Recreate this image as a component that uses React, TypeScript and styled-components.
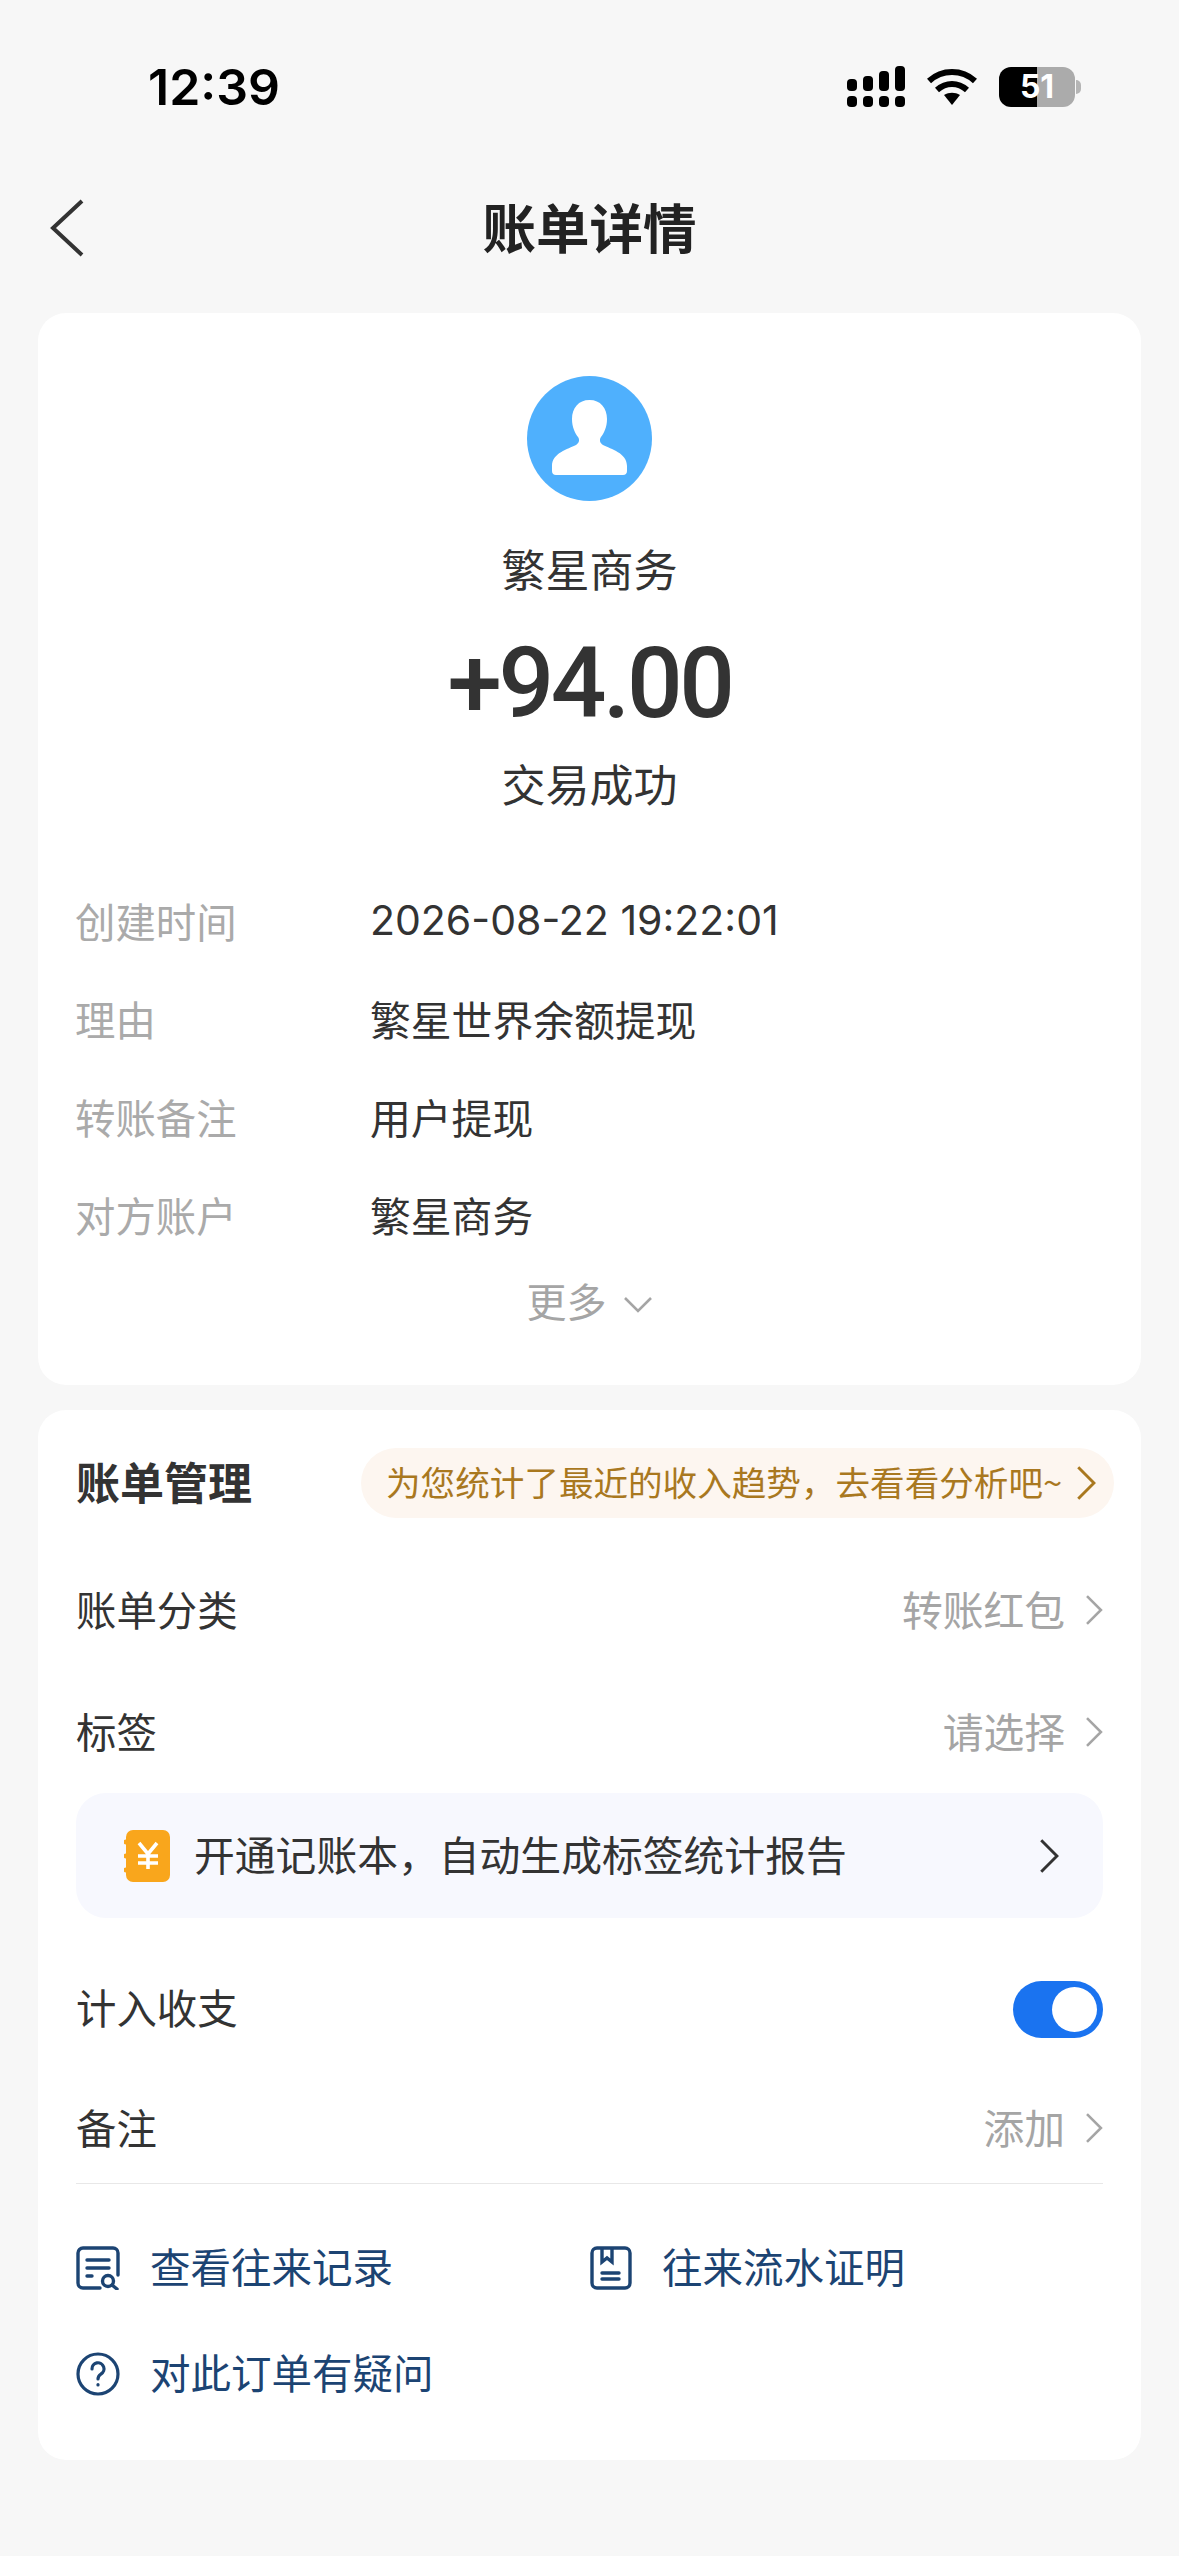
import React, {ReactElement} from 'react';
import styled, {createGlobalStyle} from 'styled-components';

const cjk = `"Noto Sans CJK SC", "Noto Sans", sans-serif`;
const latin = `Inter, "Noto Sans CJK SC", sans-serif`;

const GlobalStyle = createGlobalStyle`
  html, body {
    margin: 0;
    padding: 0;
    background: #f7f7f7;
  }

  * {
    box-sizing: border-box;
  }
`;

const Page = styled.div`
  width: 1179px;
  height: 2556px;
  overflow: hidden;
  background: #f7f7f7;
  color: #333;
  font-family: ${cjk};
`;

const StatusBar = styled.div`
  display: flex;
  justify-content: space-between;
  align-items: center;
  height: 174px;
  padding: 0 104px 0 148px;
`;

const Time = styled.div`
  font-family: ${latin};
  font-size: 50px;
  font-weight: 600;
  color: #000;
`;

const StatusIcons = styled.div`
  display: flex;
  align-items: center;
  gap: 22px;
`;

const Battery = styled.div`
  position: relative;
  width: 76px;
  height: 40px;
  border-radius: 12px;
  background: linear-gradient(90deg, #000 50%, #ababab 50%);
  color: #fff;
  font-family: ${latin};
  font-size: 32px;
  font-weight: 700;
  line-height: 40px;
  text-align: center;

  &::after {
    content: '';
    position: absolute;
    top: 13px;
    right: -6px;
    width: 5px;
    height: 14px;
    border-radius: 0 5px 5px 0;
    background: #b5b5b5;
  }
`;

const Nav = styled.div`
  position: relative;
  display: flex;
  justify-content: center;
  align-items: flex-start;
  height: 106px;
  margin-bottom: 33px;
`;

const BackIcon = styled.svg`
  position: absolute;
  left: 49px;
  top: 25px;
`;

const NavTitle = styled.h1`
  margin: 17px 0 0;
  font-size: 53.500px;
  font-weight: 700;
  line-height: 70px;
  color: #222;
`;

const Card = styled.section`
  margin: 0 38px;
  background: #fff;
  border-radius: 28px;
`;

const SummaryCard = styled(Card)`
  display: flex;
  flex-direction: column;
  align-items: center;
  padding: 63px 38px 55px;
  margin-bottom: 25px;
`;

const Name = styled.div`
  margin-top: 37px;
  font-size: 44px;
  line-height: 60px;
`;

const Amount = styled.div`
  margin-top: 31px;
  font-family: Roboto, sans-serif;
  font-size: 98px;
  font-weight: 500;
  letter-spacing: -3.400px;
  line-height: 110px;
  color: #333;
`;

const Result = styled(Name)`
  margin-top: 14px;
`;

const Details = styled.dl`
  display: grid;
  grid-template-columns: 295px 1fr;
  grid-auto-rows: 98px;
  align-items: center;
  width: calc(100% + 1px);
  margin: 58px 0 0 -1px;
`;

const Label = styled.dt`
  font-size: 40.400px;
  color: #aaa;
`;

const Value = styled.dd<{$latin?: boolean}>`
  margin: 0;
  font-family: ${({$latin}) => $latin ? latin : cjk};
  font-size: ${({$latin}) => $latin ? 41 : 40.800}px;
  color: #333;
`;

const More = styled.div`
  display: flex;
  align-items: center;
  gap: 16px;
  height: 60px;
  margin-top: 7px;
  font-size: 40px;
  color: #a5a5a5;

  svg {
    margin-top: 10px;
  }
`;

const ManageCard = styled(Card)`
  padding: 38px 38px 33px;
`;

const ManageHeader = styled.div`
  display: flex;
  justify-content: space-between;
  align-items: center;
  height: 70px;
  margin: 0 -11px 31px 0;
`;

const ManageTitle = styled.h2`
  margin: 0 0 4px;
  font-size: 44px;
  font-weight: 700;
  color: #333;
`;

const Pill = styled.div`
  display: flex;
  align-items: center;
  justify-content: space-between;
  width: 753px;
  height: 70px;
  padding: 0 18px 4px 25px;
  border-radius: 35px;
  background: #fdf6f0;
  color: #a9781f;
  font-size: 34.600px;
  white-space: nowrap;

  svg {
    margin-top: 4px;
  }
`;

const Row = styled.div<{$height?: number; $lift?: number; $ruled?: boolean}>`
  display: flex;
  justify-content: space-between;
  align-items: center;
  height: ${({$height}) => $height ?? 122}px;
  padding-bottom: ${({$lift}) => $lift ?? 4}px;
  border-bottom: ${({$ruled}) => $ruled ? '1px solid #e8e8e8' : 'none'};
  font-size: 40.400px;
  color: #333;
`;

const RowValue = styled.div`
  display: flex;
  align-items: center;
  gap: 20px;
  font-size: 40.800px;
  color: #a5a5a5;

  svg {
    margin-top: 3px;
  }
`;

const Banner = styled.div`
  display: flex;
  align-items: center;
  height: 125px;
  margin: 0 0 30px;
  padding: 0 44px 4px 48px;
  border-radius: 30px;
  background: #f7f8fe;
  font-size: 40.800px;
  color: #333;

  svg {
    margin-top: 4px;
  }
`;

const BannerText = styled.span`
  flex: 1;
  margin-left: 24px;
`;

const Toggle = styled.div`
  display: flex;
  justify-content: flex-end;
  align-items: center;
  width: 90px;
  height: 57px;
  margin-top: 6px;
  padding-right: 6px;
  border-radius: 29px;
  background: #1a73f0;

  &::after {
    content: '';
    width: 45px;
    height: 45px;
    border-radius: 50%;
    background: #fff;
  }
`;

const Links = styled.div`
  display: grid;
  grid-template-columns: 514px 1fr;
  grid-auto-rows: 106px;
  align-items: center;
  margin-top: 31px;
`;

const LinkItem = styled.div`
  display: flex;
  align-items: center;
  gap: 30px;
  font-size: 40.500px;
  color: #1c4473;
`;

const LinkText = styled.span`
  margin-bottom: 5px;
`;

function Chevron({color = '#a5a5a5', h = 32}: {color?: string; h?: number}): ReactElement {
  return (
    <svg width={h * 0.56} height={h} viewBox="0 0 18 32" fill="none">
      <path d="M2 2l14 14L2 30" stroke={color} strokeWidth="2.6" />
    </svg>
  );
}

function IconLedger(): ReactElement {
  return (
    <svg width="44" height="44" viewBox="0 0 44 44" fill="none" stroke="#1c4473" strokeWidth="3.4" strokeLinecap="round">
      <path d="M24 42H7a5 5 0 0 1-5-5V7a5 5 0 0 1 5-5h30a5 5 0 0 1 5 5v22" />
      <path d="M11 14h22M11 22h22M11 30h5" />
      <circle cx="32" cy="35" r="5.5" />
      <path d="M36 39l5 4" />
    </svg>
  );
}

function IconProof(): ReactElement {
  return (
    <svg width="42" height="44" viewBox="0 0 42 44" fill="none" stroke="#1c4473" strokeWidth="3.4" strokeLinecap="round">
      <rect x="2" y="2" width="38" height="40" rx="5" />
      <path d="M12 3v13l5-4 5 4V3M12 27h17M12 33h17" />
    </svg>
  );
}

function IconQuestion(): ReactElement {
  return (
    <svg width="44" height="44" viewBox="0 0 44 44" fill="none" stroke="#1c4473" strokeWidth="3.2" strokeLinecap="round">
      <circle cx="22" cy="22" r="20" />
      <path d="M16 17a6 6 0 1 1 9 5c-2 1.300-3 2.500-3 5" />
      <path d="M22 32.500v.5" />
    </svg>
  );
}

const details = [
  {label: '创建时间', value: '2026-08-22 19:22:01', isLatin: true},
  {label: '理由', value: '繁星世界余额提现'},
  {label: '转账备注', value: '用户提现'},
  {label: '对方账户', value: '繁星商务'},
];

export default function App(): ReactElement {
  return (
    <Page>
      <GlobalStyle />
      <StatusBar>
        <Time>12:39</Time>
        <StatusIcons>
          <svg width="58" height="42" viewBox="0 0 58 42" fill="#000">
            <rect x="0" y="13" width="10" height="12" rx="4" />
            <rect x="16" y="10" width="10" height="15" rx="4" />
            <rect x="32" y="5" width="10" height="20" rx="4" />
            <rect x="48" y="0" width="10" height="25" rx="4" />
            <rect x="0" y="30" width="10" height="11" rx="4" />
            <rect x="16" y="30" width="10" height="11" rx="4" />
            <rect x="32" y="30" width="10" height="11" rx="4" />
            <rect x="48" y="30" width="10" height="11" rx="4" />
          </svg>
          <svg width="50" height="38" viewBox="0 0 50 38" fill="none" stroke="#000" strokeWidth="6">
            <path d="M2 13c13-12 33-12 46 0" />
            <path d="M10 22c9-8 21-8 30 0" />
            <path d="M17 27l8 10 8-10c-5-3-11-3-16 0z" fill="#000" stroke="none" />
          </svg>
          <Battery>51</Battery>
        </StatusIcons>
      </StatusBar>

      <Nav>
        <BackIcon width="36" height="58" viewBox="0 0 36 58" fill="none">
          <path d="M33 2L4 29l29 27" stroke="#333" strokeWidth="4" />
        </BackIcon>
        <NavTitle>账单详情</NavTitle>
      </Nav>

      <SummaryCard>
        <svg width="125" height="125" viewBox="0 0 125 125">
          <circle cx="62.500" cy="62.500" r="62.500" fill="#4fb0fd" />
          <path
            d="M62.500 24c-11 0-17.500 8-17.500 19 0 8 3 14 6 18 2 3 1 6-2 8-8 4-24 8-24 21v5c0 2.500 1.500 4 4 4h67c2.500 0 4-1.500 4-4v-5c0-13-16-17-24-21-3-2-4-5-2-8 3-4 6-10 6-18 0-11-6.500-19-17.500-19z"
            fill="#fff"
          />
        </svg>
        <Name>繁星商务</Name>
        <Amount>+94.00</Amount>
        <Result>交易成功</Result>
        <Details>
          {details.map(({label, value, isLatin}) => (
            <React.Fragment key={label}>
              <Label>{label}</Label>
              <Value $latin={isLatin}>{value}</Value>
            </React.Fragment>
          ))}
        </Details>
        <More>
          更多
          <svg width="30" height="18" viewBox="0 0 30 18" fill="none">
            <path d="M2 2l13 13L28 2" stroke="#a5a5a5" strokeWidth="2.600" />
          </svg>
        </More>
      </SummaryCard>

      <ManageCard>
        <ManageHeader>
          <ManageTitle>账单管理</ManageTitle>
          <Pill>
            为您统计了最近的收入趋势，去看看分析吧~
            <Chevron color="#a9781f" h={36} />
          </Pill>
        </ManageHeader>
        <Row>
          账单分类
          <RowValue>转账红包<Chevron /></RowValue>
        </Row>
        <Row>
          标签
          <RowValue>请选择<Chevron /></RowValue>
        </Row>
        <Banner>
          <svg width="46" height="52" viewBox="0 0 46 52">
            <rect x="2" y="0" width="44" height="52" rx="7" fill="#f9a61c" />
            <circle cx="2" cy="12" r="2.500" fill="#f9a61c" />
            <circle cx="2" cy="26" r="2.500" fill="#f9a61c" />
            <circle cx="2" cy="40" r="2.500" fill="#f9a61c" />
            <path d="M15 13l9 11 9-11M14 26h20M14 33h20M24 24v15" fill="none" stroke="#fff" strokeWidth="3.600" />
          </svg>
          <BannerText>开通记账本，自动生成标签统计报告</BannerText>
          <Chevron color="#333" h={36} />
        </Banner>
        <Row $lift={6}>
          计入收支
          <Toggle />
        </Row>
        <Row $height={114} $lift={1} $ruled>
          备注
          <RowValue>添加<Chevron /></RowValue>
        </Row>
        <Links>
          <LinkItem><IconLedger /><LinkText>查看往来记录</LinkText></LinkItem>
          <LinkItem><IconProof /><LinkText>往来流水证明</LinkText></LinkItem>
          <LinkItem><IconQuestion /><LinkText>对此订单有疑问</LinkText></LinkItem>
        </Links>
      </ManageCard>
    </Page>
  );
}
